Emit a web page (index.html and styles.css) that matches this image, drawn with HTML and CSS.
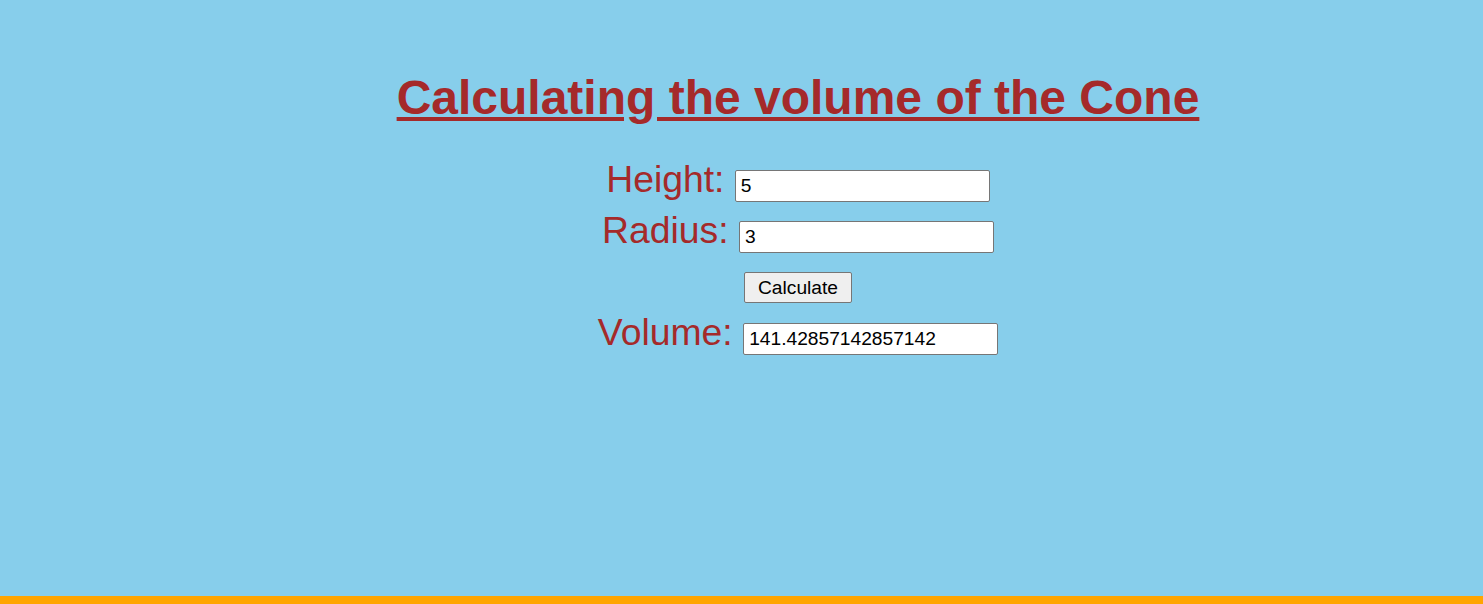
FILE: index.html
```html
<!DOCTYPE html>
<html lang="en">
<head>
<meta charset="utf-8">
<title>Volume of the Cone</title>
<link rel="stylesheet" href="styles.css">
</head>
<body>
<main class="page">
  <h1 class="title">Calculating the volume of the Cone</h1>
  <form class="calc">
    <div class="row"><label class="label" for="h">Height:</label> <input class="field" id="h" type="text" value="5"></div>
    <div class="row"><label class="label" for="r">Radius:</label> <input class="field" id="r" type="text" value="3"></div>
    <div class="row row-btn"><button class="btn" type="button">Calculate</button></div>
    <div class="row"><label class="label" for="v">Volume:</label> <input class="field" id="v" type="text" value="141.42857142857142"></div>
  </form>
</main>
<footer class="footer"></footer>
</body>
</html>
```

FILE: styles.css
```css
html, body {
  margin: 0;
  padding: 0;
}
body {
  min-height: 100vh;
  display: flex;
  flex-direction: column;
  background: #87ceeb;
  font-family: "Liberation Sans", Arial, sans-serif;
}
.page {
  flex: 1;
  padding: 70px 0 0 113px;
  text-align: center;
}
.title {
  margin: 0 0 33px;
  font-size: 48px;
  font-weight: bold;
  color: #a52a2a;
  text-decoration: underline;
}
.calc {
  margin: 0;
}
.row {
  font-size: 37.33px;
  color: #a52a2a;
  margin-bottom: 7px;
}
.row-btn {
  font-size: 16px;
  margin: 19px 0 8px;
}
.field {
  box-sizing: border-box;
  width: 255px;
  height: 32px;
  padding: 0 5px;
  font-family: "Liberation Sans", Arial, sans-serif;
  font-size: 19.2px;
  color: #000;
  background: #fff;
  border: 1px solid #767676;
  border-radius: 2px;
}
.btn {
  box-sizing: border-box;
  height: 31px;
  padding: 0 13px;
  font-family: "Liberation Sans", Arial, sans-serif;
  font-size: 19.2px;
  color: #000;
  background: #efefef;
  border: 1px solid #767676;
  border-radius: 2px;
}
.footer {
  height: 8px;
  background: #ffa500;
}
```
